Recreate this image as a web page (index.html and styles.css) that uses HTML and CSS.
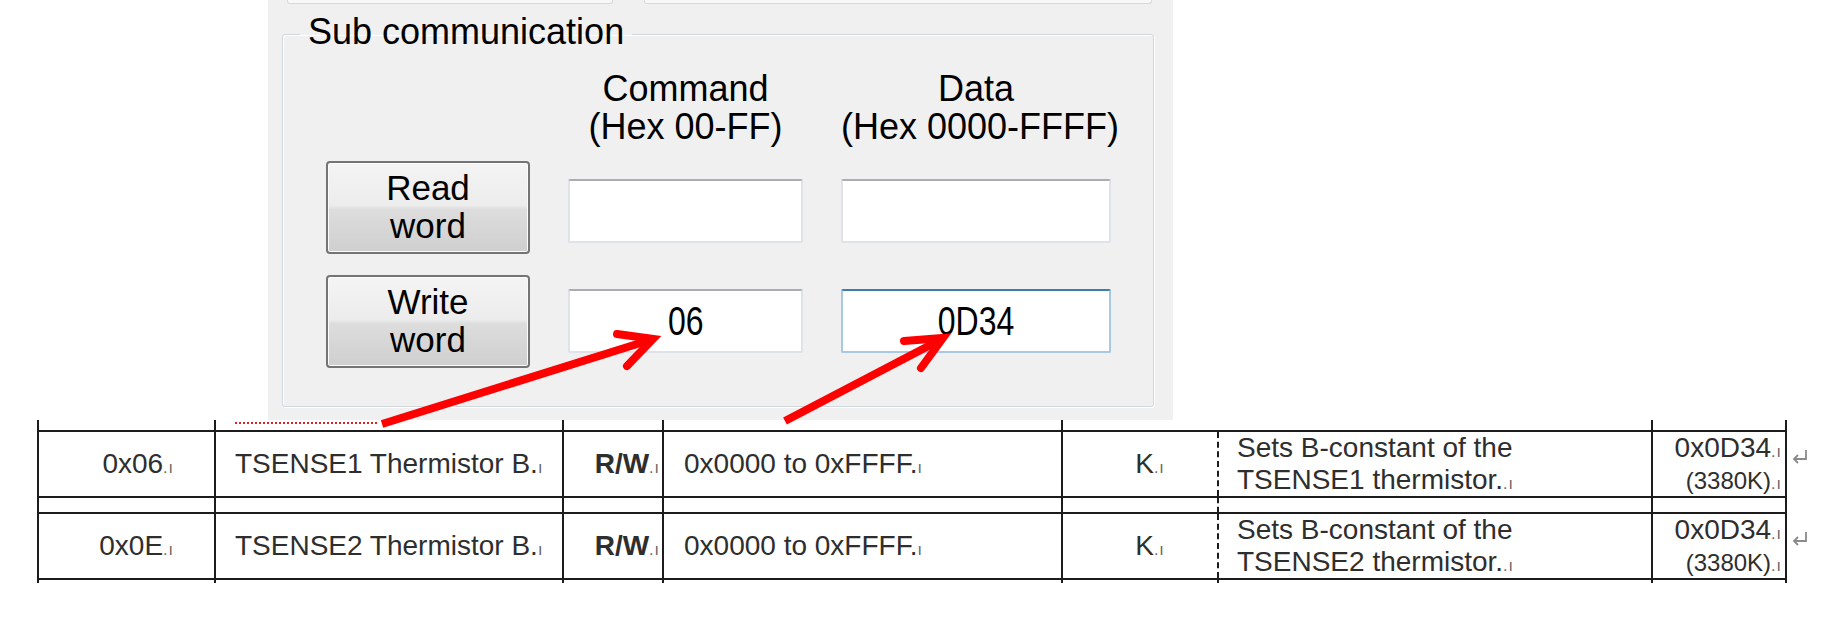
FILE: index.html
```html
<!DOCTYPE html>
<html lang="en">
<head>
<meta charset="utf-8">
<title>Sub communication</title>
<link rel="stylesheet" href="styles.css">
</head>
<body>
<div class="page">
  <section class="panel">
    <div class="strips"><div class="strip s1"></div><div class="strip s2"></div></div>
    <fieldset class="group">
      <legend>Sub communication</legend>
      <div class="grid">
        <div class="spacer"></div>
        <div class="hdr">Command<br>(Hex 00-FF)</div>
        <div class="hdr">Data<br>(Hex 0000-FFFF)</div>
        <button class="btn" type="button">Read<br>word</button>
        <div class="field r1"></div>
        <div class="field r1"></div>
        <button class="btn" type="button">Write<br>word</button>
        <div class="field"><span class="fv">06</span></div>
        <div class="field focus"><span class="fv">0D34</span></div>
      </div>
    </fieldset>
  </section>

  <table class="doc">
    <colgroup>
      <col class="w1"><col class="w2"><col class="w3"><col class="w4"><col class="w5"><col class="w6"><col class="w7"><col class="w8">
    </colgroup>
    <tr class="r-top">
      <td class="c1"></td>
      <td class="c2"><span class="sq"></span></td>
      <td class="c3"></td>
      <td class="c4"></td>
      <td class="c5"></td>
      <td class="c6"></td>
      <td class="c7"></td>
      <td class="ret"></td>
    </tr>
    <tr class="r-main">
      <td class="c1">0x06<span class="mk">.ı</span></td>
      <td class="c2">TSENSE1 Thermistor B.<span class="mk">ı</span></td>
      <td class="c3"><b>R/W</b><span class="mk">.ı</span></td>
      <td class="c4">0x0000 to 0xFFFF.<span class="mk">ı</span></td>
      <td class="c5">K<span class="mk">.ı</span></td>
      <td class="c6">Sets B-constant of the<br>TSENSE1 thermistor.<span class="mk">.ı</span></td>
      <td class="c7">0x0D34<span class="mk">.ı</span><br><span class="sm">(3380K)</span><span class="mk">.ı</span></td>
      <td class="ret"><svg class="retmark" width="20" height="18" viewBox="0 0 20 18"><path d="M16 2 V11 H4 M8 7 L4 11 L8 15" fill="none" stroke="#8a8a8a" stroke-width="1.8"/></svg></td>
    </tr>
    <tr class="r-gap">
      <td class="c1"></td>
      <td class="c2"></td>
      <td class="c3"></td>
      <td class="c4"></td>
      <td class="c5"></td>
      <td class="c6"></td>
      <td class="c7"></td>
      <td class="ret"></td>
    </tr>
    <tr class="r-main">
      <td class="c1">0x0E<span class="mk">.ı</span></td>
      <td class="c2">TSENSE2 Thermistor B.<span class="mk">ı</span></td>
      <td class="c3"><b>R/W</b><span class="mk">.ı</span></td>
      <td class="c4">0x0000 to 0xFFFF.<span class="mk">ı</span></td>
      <td class="c5">K<span class="mk">.ı</span></td>
      <td class="c6">Sets B-constant of the<br>TSENSE2 thermistor.<span class="mk">.ı</span></td>
      <td class="c7">0x0D34<span class="mk">.ı</span><br><span class="sm">(3380K)</span><span class="mk">.ı</span></td>
      <td class="ret"><svg class="retmark" width="20" height="18" viewBox="0 0 20 18"><path d="M16 2 V11 H4 M8 7 L4 11 L8 15" fill="none" stroke="#8a8a8a" stroke-width="1.8"/></svg></td>
    </tr>
    <tr class="r-bot">
      <td class="c1"></td><td class="c2"></td><td class="c3"></td><td class="c4"></td>
      <td class="c5"></td><td class="c6"></td><td class="c7"></td><td class="ret"></td>
    </tr>
  </table>

  <svg class="arrows" width="1834" height="620" viewBox="0 0 1834 620">
    <g stroke="#ff0000" stroke-width="8" fill="none" stroke-linejoin="miter">
      <path d="M382 424 L650 340"/>
      <path d="M617 334 L653 339 L627 366" stroke-linecap="round"/>
      <path d="M785 421 L940 340"/>
      <path d="M904 341 L943 338 L921 368" stroke-linecap="round"/>
    </g>
  </svg>
</div>
</body>
</html>
```

FILE: styles.css
```css
html, body {
  margin: 0;
  padding: 0;
  background: #ffffff;
}

.page {
  position: relative;
  width: 1834px;
  height: 620px;
  overflow: hidden;
  background: #ffffff;
}

/* ---------- dialog panel ---------- */
.panel {
  margin-left: 268px;
  width: 905px;
  height: 420px;
  background: #f0f0f0;
  overflow: hidden;
  font-family: "Liberation Sans", Arial, sans-serif;
  color: #000;
}

.strips {
  display: flex;
  height: 4px;
}

.strip {
  height: 3px;
  background: #f8f8f8;
  border: 1px solid #d3dbe1;
  border-top: none;
  border-radius: 0 0 3px 3px;
}

.s1 { margin-left: 19px; width: 324px; }
.s2 { margin-left: 31px; width: 506px; }

.group {
  margin: 8px 0 0 14px;
  width: 872px;
  box-sizing: border-box;
  min-width: 0;
  padding: 0;
  border: 1px solid #d0d8de;
  border-radius: 3px;
  box-shadow: inset 1px 1px 0 #ffffff, 1px 1px 0 #ffffff;
}

.group legend {
  margin-left: 17px;
  padding: 0 8px 5px;
  font-size: 36px;
  line-height: 40px;
}

.grid {
  display: grid;
  grid-template-columns: 204px 235px 270px;
  grid-template-rows: auto 93px 93px;
  column-gap: 38px;
  row-gap: 21px;
  padding: 13px 0 38px 43px;
}

.hdr {
  font-size: 36px;
  line-height: 38px;
  text-align: center;
  white-space: nowrap;
  margin-bottom: -6.5px;
}

.btn {
  font-family: "Liberation Sans", Arial, sans-serif;
  font-size: 35px;
  line-height: 38px;
  color: #000;
  padding: 0;
  border: 2px solid #747474;
  border-radius: 4px;
  background: linear-gradient(#f4f4f4 0%, #ececec 48%, #dddddd 52%, #cfcfcf 100%);
  box-shadow: inset 0 0 0 1px #fbfbfb;
}

.field {
  align-self: center;
  height: 64px;
  box-sizing: border-box;
  background: #ffffff;
  border: 2px solid #dfe3e8;
  border-top-color: #abadb3;
  border-radius: 2px;
  display: flex;
  align-items: center;
  justify-content: center;
}

.field.r1 { margin-top: 7px; }

.field.focus {
  border-color: #a9c9e2;
  border-top-color: #3f7cb1;
}

.fv {
  display: inline-block;
  font-size: 41px;
  line-height: 41px;
  transform: scaleX(0.78);
}

/* ---------- document table ---------- */
.doc {
  margin-left: 37px;
  border-collapse: collapse;
  table-layout: fixed;
  width: 1788px;
  font-family: "Liberation Sans", Arial, sans-serif;
  font-size: 28px;
  line-height: 32px;
  color: #2e2e2e;
}

.w1 { width: 177px; }
.w2 { width: 348px; }
.w3 { width: 100px; }
.w4 { width: 399px; }
.w5 { width: 156px; }
.w6 { width: 434px; }
.w7 { width: 134px; }
.w8 { width: 40px; }

.doc td {
  border: 2px solid #1c1c1c;
  padding: 0;
  vertical-align: middle;
  white-space: nowrap;
  overflow: hidden;
}

.doc td.c5 { border-right-style: dashed; }
.doc td.c6 { border-left-style: dashed; }
.doc td.ret { border: none; overflow: visible; }

.r-top td {
  height: 10px;
  border-top: none;
  vertical-align: top;
}
.r-top td.c6 { border-left: hidden; }

.r-main td { height: 64px; }
.r-gap td { height: 14px; vertical-align: top; }
.r-bot td { height: 3px; border-bottom: none; }

.c1 { text-align: right; padding-right: 40px !important; }
.c3 { text-align: right; padding-right: 2px !important; }
.c5 { text-align: center; padding-left: 20px !important; }
.c2 { padding-left: 19px !important; }
.c4 { padding-left: 20px !important; }
.c6 { padding-left: 18px !important; }
.c7 { text-align: right; padding-right: 3px !important; }

.mk {
  font-size: 16px;
  line-height: 0;
  color: #666;
  letter-spacing: 1px;
}

.sm {
  font-size: 24px;
  line-height: 24px;
}

.sq {
  display: block;
  margin: 2px 0 0 0;
  width: 142px;
  border-bottom: 2px dotted #e52222;
}

.retmark {
  display: block;
  margin: -14px 0 0 3px;
}

/* ---------- annotation arrows (overlay) ---------- */
.arrows {
  position: absolute;
  left: 0;
  top: 0;
  pointer-events: none;
}
```
